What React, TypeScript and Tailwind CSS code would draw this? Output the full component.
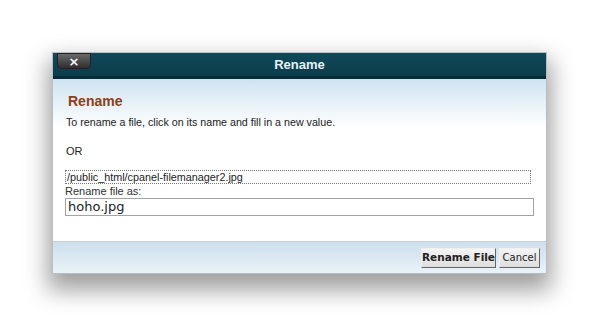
import React from "react"

export default function App() {
  return (
    <div className="w-[600px] h-[328px] bg-white pl-[52px] pt-[52px] font-['Liberation_Sans',Arial,sans-serif]">
      <div className="w-[495px] h-[222px] flex flex-col border border-[#b9bec2] bg-white shadow-[0_12px_22px_4px_rgba(0,0,0,0.38)]">
        {/* header */}
        <div className="h-[26px] grid grid-cols-[1fr_auto_1fr] items-start bg-gradient-to-b from-[#10495a] to-[#0c3c4a] border-b-[3px] border-[#062c37]">
          <div>
            <button className="ml-[4px] w-[34px] h-[16px] rounded-b-[4px] bg-gradient-to-b from-[#6a6a6a] to-[#2f2f2f] border border-[#222] text-white text-[13px] leading-[13px] font-bold font-['DejaVu_Sans',sans-serif] flex items-center justify-center">
              ×
            </button>
          </div>
          <div className="h-[23px] flex items-center text-[#e6f0f3] text-[13px] font-bold">
            Rename
          </div>
          <div />
        </div>

        {/* body */}
        <div className="flex-1 flex flex-col px-[12px] bg-gradient-to-b from-[#cfe3f0] via-white via-[30%] to-white">
          <h2 className="mt-[14px] ml-[3px] text-[14px] leading-[16px] font-bold text-[#8e3d16]">Rename</h2>
          <p className="mt-[6px] ml-[1px] text-[10.7px] leading-[14px] text-[#222]">
            To rename a file, click on its name and fill in a new value.
          </p>
          <p className="mt-[15px] ml-[1px] text-[11px] leading-[14px] text-[#222]">OR</p>
          <div className="mt-[12px] w-[466px] h-[14px] border border-dotted border-[#777] text-[10.8px] leading-[12px] text-[#222] pl-[1px]">
            /public_html/cpanel-filemanager2.jpg
          </div>
          <div className="text-[11px] leading-[14px] text-[#333]">Rename file as:</div>
          <div className="w-[469px] h-[18px] border border-[#a2a2a2] pl-[2px] text-[13px] leading-[16px] text-[#222] font-['DejaVu_Sans',sans-serif]">
            hoho.jpg
          </div>
        </div>

        {/* footer */}
        <div className="h-[32px] flex items-center justify-end gap-[3px] pr-[6px] border-t border-[#c6d1d8] bg-gradient-to-b from-[#cddfec] to-[#e9f2f8]">
          <button className="h-[20px] w-[75px] whitespace-nowrap bg-gradient-to-b from-[#f4f4f4] to-[#dedede] border border-t-[#f0f0f0] border-l-[#f0f0f0] border-r-[#666] border-b-[#666] text-[10.5px] font-bold text-[#222] font-['DejaVu_Sans',sans-serif]">
            Rename File
          </button>
          <button className="h-[20px] w-[41px] whitespace-nowrap bg-gradient-to-b from-[#f4f4f4] to-[#dedede] border border-t-[#f0f0f0] border-l-[#f0f0f0] border-r-[#666] border-b-[#666] text-[10px] text-[#222] font-['DejaVu_Sans',sans-serif]">
            Cancel
          </button>
        </div>
      </div>
    </div>
  )
}
